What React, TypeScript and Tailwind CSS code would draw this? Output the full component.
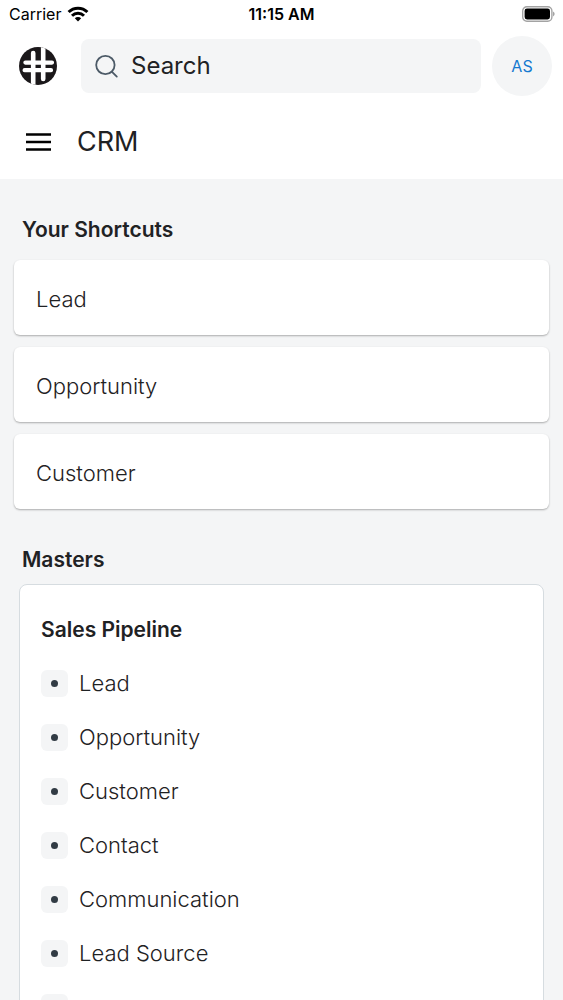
const shortcuts = ["Lead", "Opportunity", "Customer"];
const pipeline = ["Lead", "Opportunity", "Customer", "Contact", "Communication", "Lead Source", ""];

function Logo() {
  return (
    <svg viewBox="0 0 40 40" className="size-10 shrink-0" aria-hidden="true">
      <defs>
        <clipPath id="disc">
          <circle cx="20" cy="20" r="19" />
        </clipPath>
      </defs>
      <g clipPath="url(#disc)">
        <rect width="40" height="40" fill="#1b181a" />
        <g stroke="#fff" strokeLinecap="round">
          <path d="M15.2 7V42M25.2 -2V33" strokeWidth="4.6" />
          <path d="M7.4 16.6H34M6.6 24.2H33" strokeWidth="4.2" />
        </g>
        <rect x="18.3" y="19.3" width="3.8" height="2.2" fill="#1b181a" />
      </g>
    </svg>
  );
}

function WifiIcon() {
  return (
    <svg viewBox="0 0 22 16" className="h-4 w-[22px]" aria-hidden="true">
      <g fill="none" stroke="#000" strokeWidth="3">
        <path d="M1.6 6a13.4 13.4 0 0 1 18.8 0" />
        <path d="M5 9.8a8.6 8.6 0 0 1 12 0" />
      </g>
      <path d="M11 15.4 7.8 12.2a4.6 4.6 0 0 1 6.4 0Z" />
    </svg>
  );
}

function BatteryIcon() {
  return (
    <svg viewBox="0 0 34 16" className="h-4 w-[34px]" aria-label="Battery full">
      <rect x="1.7" y="0.7" width="29.2" height="14.6" rx="4.2" fill="none" stroke="#a3a3a3" strokeWidth="1.4" />
      <rect x="3.6" y="2.6" width="25.4" height="10.8" rx="2.4" />
      <path d="M32.2 5.6c1.8.8 1.8 4 0 4.8Z" fill="#8f8f8f" />
    </svg>
  );
}

export default function App() {
  return (
    <div className="flex h-dvh flex-col overflow-hidden bg-[#f4f5f6] font-['Inter',sans-serif] text-[#1f2224]">
      <header className="shrink-0 bg-white">
        <div className="grid h-7 grid-cols-3 items-center px-2 text-black">
          <div className="flex items-center gap-1.5 pl-px text-base">
            Carrier
            <WifiIcon />
          </div>
          <div className="text-center text-base font-semibold">11:15 AM</div>
          <div className="flex justify-end">
            <BatteryIcon />
          </div>
        </div>
        <div className="flex items-center pt-2 pr-[11px] pl-[18px]">
          <Logo />
          <label className="mr-[11px] ml-[23px] flex h-[54px] min-w-0 flex-1 items-center gap-3 rounded-lg bg-[#f4f5f6] pl-3">
            <svg viewBox="0 0 26 26" className="size-[26px] shrink-0" fill="none" stroke="#4c5a67" strokeWidth="1.8" strokeLinecap="round" aria-hidden="true">
              <circle cx="12.4" cy="12" r="9.2" />
              <path d="m19 18.8 4.8 4.8" />
            </svg>
            <input aria-label="Search" placeholder="Search" className="w-full min-w-0 bg-transparent text-2xl outline-none placeholder:text-[#1f2224]" />
          </label>
          <button className="size-[60px] shrink-0 rounded-full bg-[#f4f5f6] text-base text-[#1579d0]">AS</button>
        </div>
        <div className="flex h-[83px] items-center gap-[26px] pt-2 pr-6 pl-[26px]">
          <button aria-label="Menu">
            <svg viewBox="0 0 25 18" className="h-[18px] w-[25px]" aria-hidden="true">
              <path d="M0 1.5h25M0 9h25M0 16.5h25" stroke="#000" strokeWidth="2.6" />
            </svg>
          </button>
          <h1 className="text-[27px] leading-9">CRM</h1>
        </div>
      </header>

      <main className="min-h-0 flex-1">
        <section className="px-[14px] pt-[33px]">
          <h2 className="pl-2 text-[21px] leading-9 font-semibold">Your Shortcuts</h2>
          <div className="mt-3 flex flex-col gap-3">
            {shortcuts.map((name) => (
              <a key={name} href="#" className="flex h-[75px] items-center rounded-md bg-white px-[22px] pt-1 text-[22px] font-light shadow-[0_1px_2px_rgba(0,0,0,0.3)]">
                {name}
              </a>
            ))}
          </div>
        </section>

        <section className="px-[19px] pt-[33px]">
          <h2 className="pl-[3px] text-[21px] leading-9 font-semibold">Masters</h2>
          <div className="mt-1.5 rounded-lg border border-[#d6dce0] bg-white px-[21px] pt-[27px]">
            <h3 className="text-[21px] leading-9 font-semibold">Sales Pipeline</h3>
            <ul className="mt-2">
              {pipeline.map((name) => (
                <li key={name} className="flex h-[54px] items-center gap-[11px]">
                  <span className="flex size-[27px] shrink-0 items-center justify-center rounded-md bg-[#f4f5f6]">
                    <span className="size-[7px] rounded-full bg-[#313b44]" />
                  </span>
                  <a href="#" className="pt-px text-[22px] font-light">{name}</a>
                </li>
              ))}
            </ul>
          </div>
        </section>
      </main>
    </div>
  );
}
